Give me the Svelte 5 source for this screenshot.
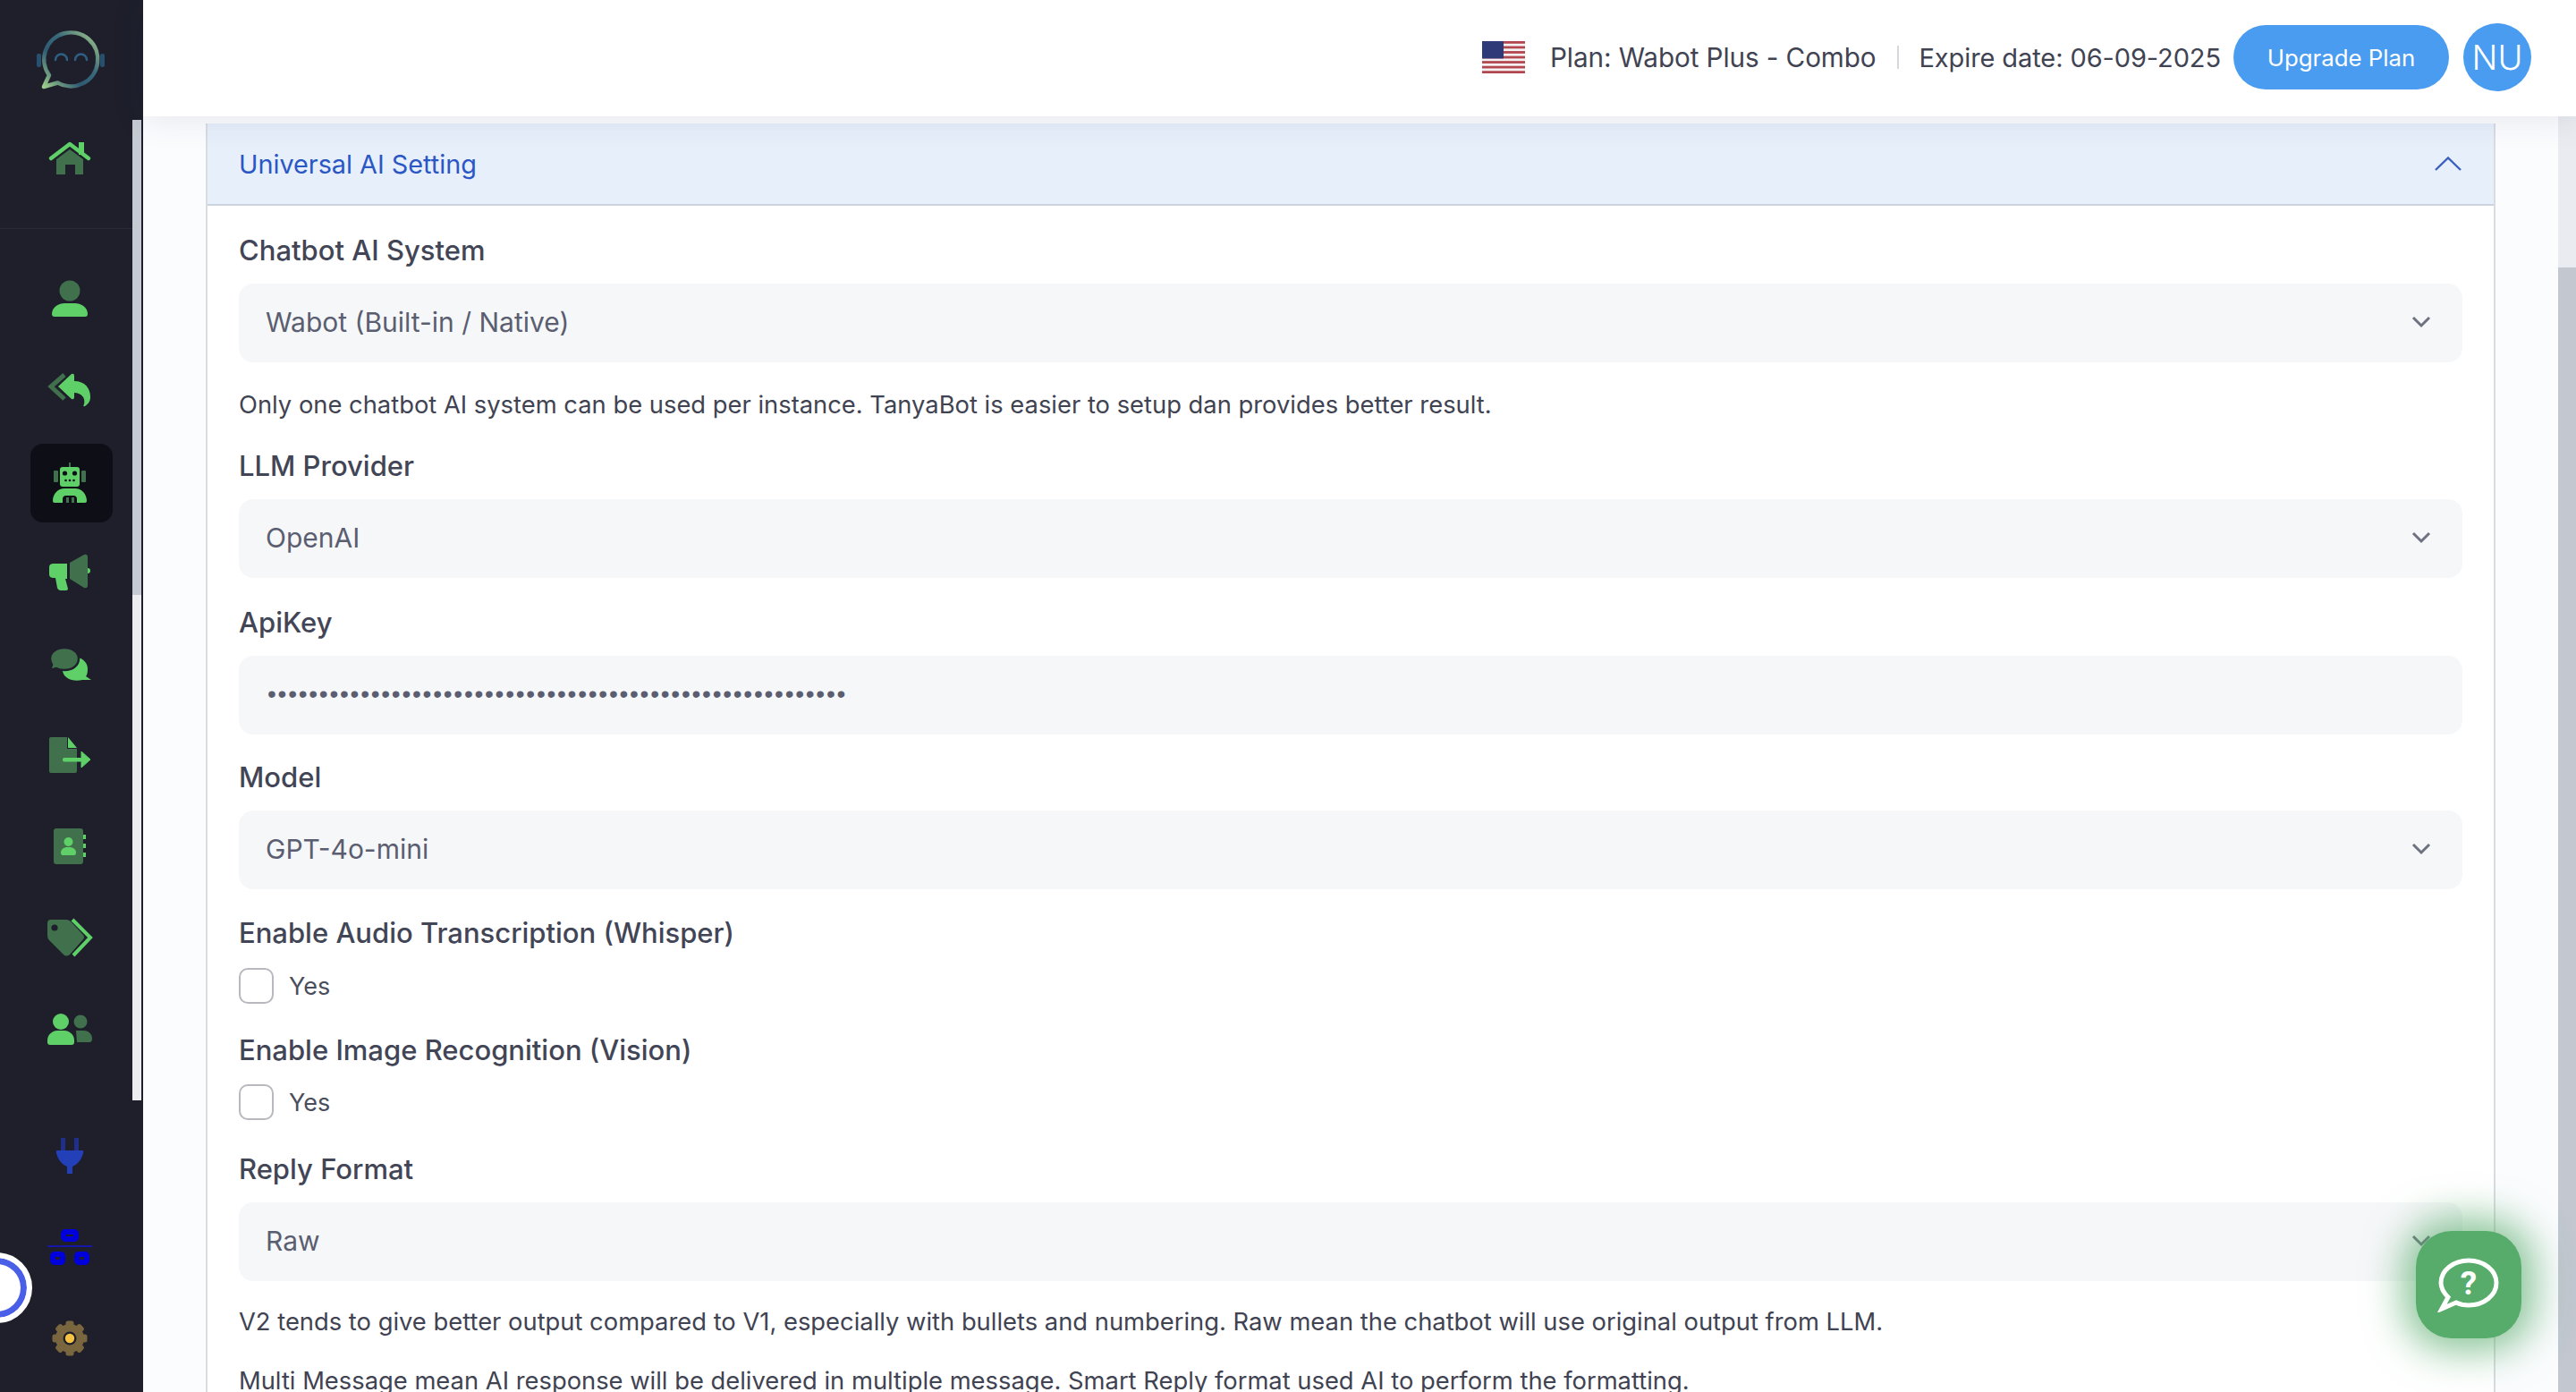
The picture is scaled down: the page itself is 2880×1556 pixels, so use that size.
<script>
  const dots = '•'.repeat(56);
  const teeth = [0, 45, 90, 135];
  const stripes = [0, 2, 4, 6, 8, 10, 12];
  const navIcons = ['user', 'reply', 'robot', 'mega', 'chat', 'file', 'book', 'tag', 'users'];
</script>

<div class="page">
  <aside class="side">
    <div class="logo">
      <svg width="80" height="80" viewBox="0 0 80 80">
        <defs>
          <linearGradient id="ring" x1="0" y1="1" x2="1" y2="0">
            <stop offset="0" stop-color="#9ccb8a" />
            <stop offset="0.35" stop-color="#2f5a72" />
            <stop offset="0.6" stop-color="#38687a" />
            <stop offset="1" stop-color="#a8cc8c" />
          </linearGradient>
        </defs>
        <rect x="1" y="34" width="5" height="15" rx="2" fill="#26506e" />
        <rect x="72" y="34" width="5" height="15" rx="2" fill="#26506e" />
        <path d="M15 58 A30 30 0 1 1 24.5 66.5 L9 71 Z" fill="none" stroke="url(#ring)" stroke-width="4.5" stroke-linejoin="round" />
        <path d="M22 41 a6.5 6.5 0 0 1 13 0 M44 41 a6.5 6.5 0 0 1 13 0" fill="none" stroke="#2f5f80" stroke-width="2.5" stroke-linecap="round" />
      </svg>
    </div>

    <div class="scroller">
      <nav class="nav">
        <div class="home">
          <svg class="ico" viewBox="0 0 60 60">
            <path d="M15 31 L30 20 L45 31 V48 H36 V37 H25 V48 H15 Z" fill="#40704c" />
            <rect x="40" y="12" width="6" height="14" fill="#5fd068" />
            <path d="M9 30 L30 14 L51 30" fill="none" stroke="#5fd068" stroke-width="4.5" stroke-linecap="round" stroke-linejoin="round" />
          </svg>
        </div>
        {#each navIcons as name}
          <div class="item" class:active={name === 'robot'}>
            <svg class="ico" viewBox="0 0 60 60">
              {#if name === 'user'}
                <circle cx="30" cy="21" r="11.5" fill="#40704c" />
                <path d="M10 47 C10 39 18 35 24 35 H36 C42 35 50 39 50 47 Q50 50 47 50 H13 Q10 50 10 47 Z" fill="#5fd068" />
              {:else if name === 'reply'}
                <path d="M24 13 L9 26 L24 40" fill="none" stroke="#40704c" stroke-width="5" />
                <path d="M17 26 L32 12 Q35 11 35 14 V20 C47 20 53 28 53 38 C53 43 50 46 47 48 C45 49 45 47 46 46 C48 38 42 33 35 33 V38 Q35 41 32 40 Z" fill="#5fd068" />
              {:else if name === 'robot'}
                <rect x="29" y="9" width="2" height="6" fill="#40704c" />
                <rect x="12" y="18" width="5" height="13" rx="1" fill="#40704c" />
                <rect x="43" y="18" width="5" height="13" rx="1" fill="#40704c" />
                <rect x="19" y="14" width="22" height="22" rx="3" fill="#5fd068" />
                <circle cx="24.5" cy="21" r="2.6" fill="#0e0f16" />
                <circle cx="35.5" cy="21" r="2.6" fill="#0e0f16" />
                <circle cx="25.5" cy="29" r="1.3" fill="#0e0f16" />
                <circle cx="30" cy="29" r="1.3" fill="#0e0f16" />
                <circle cx="34.5" cy="29" r="1.3" fill="#0e0f16" />
                <path d="M11 52 C11 44 17 38 24 38 H36 C43 38 49 44 49 52 Q49 54 47 54 H38 V50 Q38 46 34 46 H26 Q22 46 22 50 V54 H13 Q11 54 11 52 Z" fill="#5fd068" />
                <rect x="26" y="48" width="3" height="6" fill="#40704c" />
                <rect x="32" y="48" width="3" height="6" fill="#40704c" />
              {:else if name === 'mega'}
                <circle cx="50" cy="28" r="3" fill="#5fd068" />
                <path d="M30 19 L46 10 Q50 9 50 13 V44 Q50 48 46 47 L30 37 Z" fill="#40704c" />
                <path d="M12 20 H27 V37 H25 L28 48 Q28 50 26 50 H20 Q17 50 16 47 L14 36 H12 Q7 36 7 32 V24 Q7 20 12 20 Z" fill="#5fd068" />
              {:else if name === 'chat'}
                <path d="M22 37 C22 28 30 22 38 23 C46 24 50 30 50 36 C50 40 49 43 48 44 L54 48 H44 C40 49 36 49 32 48 C26 46 22 42 22 37 Z" fill="#5fd068" />
                <path d="M8 37 L10 31 C8 28 8 26 8 24 C8 17 15 12 24 12 C33 12 40 17 40 24 C40 32 33 37 24 37 C20 37 17 36 15 35 Z" fill="#40704c" stroke="#1e1f2b" stroke-width="2.5" />
              {:else if name === 'file'}
                <path d="M9 10 H27 V23 H38 V48 Q38 50 36 50 H9 Q7 50 7 48 V12 Q7 10 9 10 Z" fill="#40704c" />
                <path d="M28 10 L38 22 H28 Z" fill="#5fd068" />
                <rect x="22" y="33" width="22" height="4.5" rx="2" fill="#5fd068" />
                <path d="M43 26 L53 35 L43 44 Z" fill="#5fd068" stroke="#5fd068" stroke-width="1" stroke-linejoin="round" />
              {:else if name === 'book'}
                <rect x="12" y="10" width="33" height="40" rx="3" fill="#40704c" />
                <rect x="45" y="17" width="3" height="5" fill="#5fd068" />
                <rect x="45" y="27" width="3" height="5" fill="#5fd068" />
                <rect x="45" y="37" width="3" height="5" fill="#5fd068" />
                <circle cx="28.5" cy="25" r="5" fill="#5fd068" />
                <path d="M20 37 C20 33 24 31 27 31 H30 C33 31 37 33 37 37 Q37 40 35 40 H22 Q20 40 20 37 Z" fill="#5fd068" />
              {:else if name === 'tag'}
                <path d="M33 10 L53 30 L34 50" fill="none" stroke="#5fd068" stroke-width="4" />
                <path d="M9 10 H26 Q29 10 31 12 L45 27 Q47 30 45 32 L30 49 Q26 52 23 49 L7 33 Q5 31 5 28 V14 Q5 10 9 10 Z" fill="#40704c" />
                <circle cx="13" cy="19" r="3.6" fill="#1e1f2b" />
              {:else}
                <circle cx="42" cy="22" r="7.5" fill="#40704c" />
                <path d="M37 32 H46 C51 32 55 36 55 41 Q55 45 52 45 H38 Z" fill="#40704c" />
                <circle cx="20" cy="22" r="9" fill="#5fd068" />
                <path d="M5 43 C5 36 11 32 16 32 H24 C29 32 35 36 35 43 V45 Q35 48 32 48 H8 Q5 48 5 45 Z" fill="#5fd068" />
              {/if}
            </svg>
          </div>
        {/each}
      </nav>
      <div class="rail"><div class="thumb"></div></div>
    </div>

    <div class="foot">
      <svg class="ico" viewBox="0 0 60 60">
        <rect x="20" y="10" width="5" height="15" fill="#1f2f8a" />
        <rect x="35" y="10" width="5" height="15" fill="#1f2f8a" />
        <path d="M16 24 H44 Q46 24 45 27 C43 35 38 40 33 42 V50 H27 V42 C22 40 17 35 15 27 Q14 24 16 24 Z" fill="#2340b8" />
      </svg>
      <svg class="ico" viewBox="0 0 60 60">
        <rect x="23" y="13" width="14" height="8" rx="2" fill="none" stroke="#0000dd" stroke-width="6" />
        <path d="M5 29 H55" stroke="#1616a8" stroke-width="2" />
        <rect x="11" y="38" width="11" height="9" rx="2" fill="none" stroke="#0000dd" stroke-width="6" />
        <rect x="38" y="38" width="11" height="9" rx="2" fill="none" stroke="#0000dd" stroke-width="6" />
      </svg>
      <svg class="ico" viewBox="0 0 60 60">
        {#each teeth as a}
          <rect x="25.5" y="10.5" width="9" height="39" rx="2.5" fill="#7a663e" transform="rotate({a} 30 30)" />
        {/each}
        <circle cx="30" cy="30" r="16" fill="#7a663e" />
        <circle cx="30" cy="30" r="7.5" fill="#1e1f2b" />
        <circle cx="30" cy="30" r="5.2" fill="#f5c242" />
      </svg>
    </div>
  </aside>

  <div class="main">
    <header class="top">
      <svg class="flag" viewBox="0 0 48 36" preserveAspectRatio="none">
        <rect width="48" height="36" fill="#f4f2f2" />
        {#each stripes as s}
          <rect y={s * 2.77} width="48" height="2.77" fill="#b2474f" />
        {/each}
        <rect width="24" height="19.4" fill="#2f3b78" />
      </svg>
      <span class="plan p1">Plan: Wabot Plus - Combo</span>
      <span class="sep"></span>
      <span class="plan">Expire date: 06-09-2025</span>
      <button class="up">Upgrade Plan</button>
      <div class="avatar">NU</div>
    </header>

    <div class="content">
      <section class="panel">
        <div class="phead">
          <span>Universal AI Setting</span>
          <svg width="30" height="16" viewBox="0 0 30 16"><path d="M1 15 L15 1.5 L29 15" fill="none" stroke="#3a5fc0" stroke-width="2.4" /></svg>
        </div>
        <div class="pbody">
          <div class="lab">Chatbot AI System</div>
          <div class="fld">Wabot (Built-in / Native)<svg class="chev" viewBox="0 0 22 14"><path d="M2 2 L11 11 L20 2" /></svg></div>
          <p class="help h1">Only one chatbot AI system can be used per instance. TanyaBot is easier to setup dan provides better result.</p>

          <div class="lab g1">LLM Provider</div>
          <div class="fld">OpenAI<svg class="chev" viewBox="0 0 22 14"><path d="M2 2 L11 11 L20 2" /></svg></div>

          <div class="lab g2">ApiKey</div>
          <div class="fld"><span class="dots">{dots}</span></div>

          <div class="lab g3">Model</div>
          <div class="fld">GPT-4o-mini<svg class="chev" viewBox="0 0 22 14"><path d="M2 2 L11 11 L20 2" /></svg></div>

          <div class="lab g4">Enable Audio Transcription (Whisper)</div>
          <label class="chk c1"><span class="box"></span>Yes</label>

          <div class="lab g5">Enable Image Recognition (Vision)</div>
          <label class="chk c2"><span class="box"></span>Yes</label>

          <div class="lab g6">Reply Format</div>
          <div class="fld">Raw<svg class="chev" viewBox="0 0 22 14"><path d="M2 2 L11 11 L20 2" /></svg></div>
          <p class="help h2">V2 tends to give better output compared to V1, especially with bullets and numbering. Raw mean the chatbot will use original output from LLM.</p>
          <p class="help h3">Multi Message mean AI response will be delivered in multiple message. Smart Reply format used AI to perform the formatting.</p>
        </div>
      </section>
      <div class="sbar"><div class="sthumb"></div></div>
    </div>
  </div>

  <div class="puck"></div>
  <button class="fab" aria-label="Help">
    <svg width="70" height="62" viewBox="0 0 70 62">
      <path d="M5 58 L12 45 C6 39 4 34 4 29 C4 15 18 4 35 4 C52 4 66 15 66 29 C66 43 52 54 35 54 C30 54 25 53 21 51 Z" fill="none" stroke="#fff" stroke-width="5" stroke-linejoin="miter" />
    </svg>
    <span class="q">?</span>
  </button>
</div>

<style>
  :global(body) { margin: 0; background: #fff; }
  .page {
    width: 2880px; height: 1556px; display: flex; overflow: hidden;
    position: relative; font-family: Inter, "Liberation Sans", sans-serif;
  }
  .side { width: 160px; height: 1556px; background: #1e1f2b; display: flex; flex-direction: column; flex: none; }
  .logo { height: 134px; flex: none; box-sizing: border-box; padding: 26px 0 0 40px; }
  .logo svg { display: block; }
  .scroller { height: 1096px; display: flex; flex: none; }
  .nav { width: 148px; flex: none; }
  .rail { width: 10px; background: #ecedf1; flex: none; }
  .thumb { height: 531px; background: #c6cad3; }
  .home { height: 122px; box-sizing: border-box; border-bottom: 1px solid #282a37; padding: 13px 0 0 48px; }
  .ico { width: 60px; height: 60px; display: block; }
  .item { height: 102px; display: flex; align-items: center; padding-left: 48px; position: relative; }
  .home + .item { margin-top: 27px; }
  .item.active::before {
    content: ""; position: absolute; left: 34px; top: 9px; width: 92px; height: 88px;
    background: #0e0f16; border-radius: 14px;
  }
  .item svg { position: relative; }
  .foot { padding: 32px 0 0 48px; display: flex; flex-direction: column; gap: 42px; }
  .main { flex: 1; min-width: 0; display: flex; flex-direction: column; }
  .top {
    height: 130px; flex: none; background: #fff; display: flex; align-items: center;
    padding: 0 0 2px 1497px; box-sizing: border-box; position: relative; z-index: 2;
    box-shadow: 0 4px 34px rgba(40, 50, 90, 0.1);
  }
  .flag { width: 48px; height: 36px; margin-right: 28px; flex: none; }
  .plan { font-size: 29px; color: #3f4352; white-space: nowrap; letter-spacing: -0.1px; }
  .p1 { font-size: 29.7px; }
  .sep { width: 2px; height: 26px; background: #d6d7dc; margin: 0 23px; flex: none; }
  .up {
    margin-left: 14px; width: 241px; height: 72px; border-radius: 36px; border: 0; background: #4a9cf0;
    color: #fff; font: 400 25.8px Inter, sans-serif; flex: none; padding: 0;
  }
  .avatar {
    margin-left: 16px; width: 76px; height: 76px; border-radius: 50%; background: #4a9cf0; color: #fff;
    display: flex; align-items: center; justify-content: center; font-size: 38px; font-weight: 300; flex: none;
  }
  .content { flex: 1; display: flex; background: #fbfcfe; min-height: 0; padding-left: 70px; }
  .panel {
    width: 2560px; box-sizing: border-box; margin-top: 8px; background: #fff; height: 1500px; flex: none;
    border: solid #d9dce1; border-width: 0 2px;
  }
  .phead {
    height: 92px; box-sizing: border-box; border-bottom: 2px solid #cbd3de; background: #e7effb;
    display: flex; align-items: center; justify-content: space-between; padding: 0 36px 0 35px;
    color: #2b57c4; font-size: 28.8px;
  }
  .pbody { padding: 30px 35px 0; color: #3f4352; }
  .lab { font-size: 31px; font-weight: 500; line-height: 40px; color: #424555; }
  .fld {
    margin-top: 17px; height: 88px; box-sizing: border-box; background: #f6f7f9; border-radius: 16px;
    display: flex; align-items: center; justify-content: space-between; padding: 0 35px 2px 30px;
    font-size: 30px; color: #5a5e70;
  }
  .chev { width: 22px; height: 14px; }
  .chev path { fill: none; stroke: #6e7180; stroke-width: 3; }
  .dots { font: 28px "Liberation Sans", sans-serif; letter-spacing: 1.77px; color: #5a5e70; white-space: nowrap; margin-left: 2px; }
  .help { margin: 0; font-size: 27.35px; line-height: 40px; color: #3f4352; white-space: nowrap; }
  .h1 { margin-top: 28px; }
  .h2 { margin-top: 26px; }
  .h3 { margin-top: 26px; }
  .g1 { margin-top: 28px; }
  .g2 { margin-top: 30px; }
  .g3 { margin-top: 28px; }
  .g4 { margin-top: 29px; }
  .g5 { margin-top: 32px; }
  .g6 { margin-top: 35px; }
  .chk { display: flex; align-items: center; font-size: 27px; color: #4a4d5c; }
  .c1 { margin-top: 19px; }
  .c2 { margin-top: 18px; }
  .box {
    width: 39px; height: 40px; box-sizing: border-box; border: 2px solid #b8b9be; border-radius: 10px;
    margin-right: 17px; background: #fff; flex: none;
  }
  .sbar { width: 20px; margin-left: 70px; background: #e9ebf0; flex: none; position: relative; }
  .sthumb { margin-top: 169px; height: 1257px; background: #c2c7d0; }
  .puck {
    position: absolute; left: -43px; top: 1400px; width: 79px; height: 79px; border-radius: 50%;
    background: #fff; box-sizing: border-box; border: 6px solid #fff;
    box-shadow: inset 0 0 0 7px #4a5fe8;
  }
  .fab {
    position: absolute; left: 2701px; top: 1376px; width: 118px; height: 120px; border-radius: 40px;
    background: #57ab6b; border: 0; padding: 0; box-shadow: 0 0 44px 14px rgba(87, 171, 107, 0.7);
    display: flex; align-items: center; justify-content: center;
  }
  .fab svg { position: absolute; left: 24px; top: 29px; }
  .q { position: absolute; left: 0; right: 0; top: 40px; text-align: center; color: #fff; font: 700 37px/37px Roboto, sans-serif; }
</style>
